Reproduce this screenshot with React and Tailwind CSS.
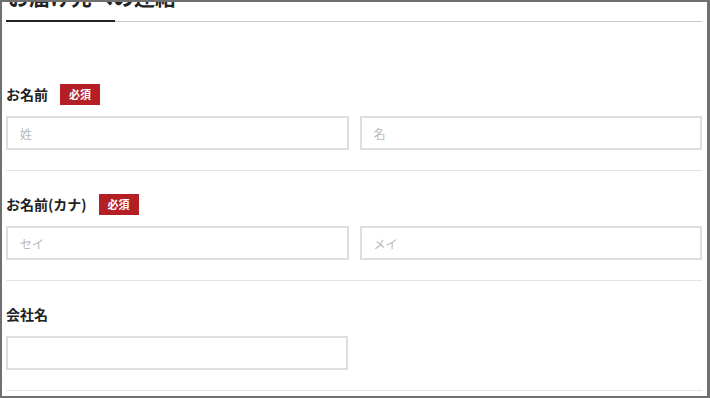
import React from 'react';

const font = { fontFamily: '"Noto Sans CJK JP", "Noto Sans", sans-serif' };

function Badge() {
  return (
    <span className="inline-flex h-[21px] w-[40px] items-center justify-center bg-[#b31f24] text-[11px] font-bold text-white">
      必須
    </span>
  );
}

function Field({ placeholder, wide }) {
  return (
    <input
      type="text"
      placeholder={placeholder}
      className={`h-[34px] ${wide ? 'w-full' : 'w-[342px]'} border-2 border-[#dedede] bg-white px-[12px] text-[12px] text-[#333] outline-none placeholder:text-[#b8b8b8]`}
    />
  );
}

function Section({ label, required, children, first }) {
  return (
    <div className={`border-b border-[#e2e2e2] pb-[20px] ${first ? 'pt-[62px]' : 'pt-[23px]'}`}>
      <div className="flex h-[21px] items-center gap-[12px]">
        <span className="text-[14px] font-bold text-[#222]">{label}</span>
        {required && <Badge />}
      </div>
      <div className="mt-[11px]">{children}</div>
    </div>
  );
}

export default function App() {
  return (
    <div
      className="h-[398px] w-[710px] overflow-hidden border-b-2 border-l-2 border-r-[3px] border-t-2 border-[#707070] bg-white pl-[4px] pr-[5px]"
      style={font}
    >
      <div className="-mt-[21px] pl-[2px] text-[21px] font-bold leading-[30px] text-[#222]">お届け先への連絡</div>
      <div className="mt-[9px] flex items-end">
        <div className="h-[2px] w-[109px] bg-[#222]" />
        <div className="h-px flex-1 bg-[#c8c8c8]" />
      </div>

      <Section label="お名前" required first>
        <div className="grid grid-cols-2 gap-[11px]">
          <Field placeholder="姓" wide />
          <Field placeholder="名" wide />
        </div>
      </Section>

      <Section label="お名前(カナ)" required>
        <div className="grid grid-cols-2 gap-[11px]">
          <Field placeholder="セイ" wide />
          <Field placeholder="メイ" wide />
        </div>
      </Section>

      <Section label="会社名">
        <Field />
      </Section>
    </div>
  );
}
